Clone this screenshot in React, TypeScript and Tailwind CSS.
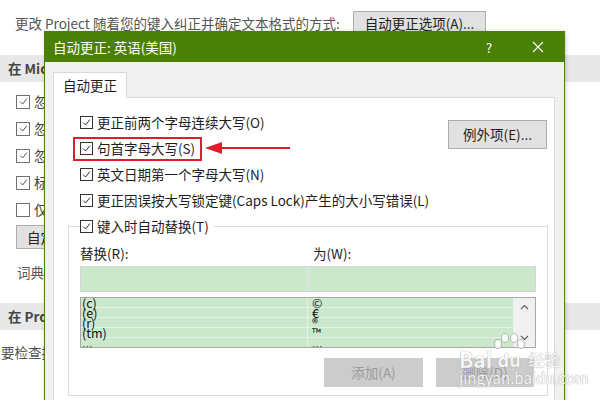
import React from 'react';

const Box: React.FC<{ checked?: boolean; page?: boolean }> = ({ checked = true, page = false }) => (
  <span
    className={`inline-flex shrink-0 items-center justify-center bg-white border ${
      page ? 'w-[14px] h-[14px] border-[#707070]' : 'w-[13px] h-[13px] border-[#333]'
    }`}
  >
    {checked && (
      <svg width="9" height="9" viewBox="0 0 9 9">
        <path d="M1.2 4.6 L3.6 7 L7.9 1.6" fill="none" stroke={page ? '#555' : '#333'} strokeWidth="1" />
      </svg>
    )}
  </span>
);

const pageChecks = [
  { label: '忽略全部大写的单词(U)', checked: true },
  { label: '忽略包含数字的单词(B)', checked: true },
  { label: '忽略 Internet 和文件地址(F)', checked: true },
  { label: '标记重复单词(R)', checked: true },
  { label: '仅根据主词典提供建议(I)', checked: false },
];

const dialogChecks = [
  '更正前两个字母连续大写(O)',
  '句首字母大写(S)',
  '英文日期第一个字母大写(N)',
  '更正因误按大写锁定键(Caps Lock)产生的大小写错误(L)',
];

const entries = [
  ['(c)', '©'],
  ['(e)', '€'],
  ['(r)', '®'],
  ['(tm)', '™'],
  ['...', '...'],
];

const App: React.FC = () => {
  return (
    <div className="relative w-[600px] h-[400px] overflow-hidden bg-white text-[13.5px] text-[#444] font-['Noto_Sans_CJK_SC',sans-serif]">
      {/* page behind the dialog */}
      <div className="flex items-center h-[25px] mt-[11px] pl-[15px] gap-[13px]">
        <span className="text-[#555]">更改 Project 随着您的键入纠正并确定文本格式的方式:</span>
        <button className="h-[25px] px-[11px] bg-[#e1e1e1] border border-[#adadad] text-[#222]">自动更正选项(A)...</button>
      </div>

      <div className="mt-[19px] h-[27px] flex items-center pl-[8px] bg-[#e8e8e8] font-bold text-[#444]">
        在 Microsoft Office 程序中更正拼写时
      </div>
      <div className="pt-[6px] pl-[16px]">
        {pageChecks.map((c) => (
          <div key={c.label} className="h-[27px] flex items-center gap-[4px]">
            <Box page checked={c.checked} />
            <span>{c.label}</span>
          </div>
        ))}
      </div>
      <button className="ml-[16px] mt-[2px] h-[24px] px-[10px] bg-[#e1e1e1] border border-[#adadad] text-[#222]">自定义词典(C)...</button>
      <div className="mt-[13px] h-[20px] pl-[17px] leading-[20px] text-[#555]">词典语言(L): 英语(美国)</div>
      <div className="mt-[21px] h-[27px] flex items-center pl-[8px] bg-[#e8e8e8] font-bold text-[#444]">
        在 Project 中更正拼写时
      </div>
      <div className="mt-[12px] h-[20px] pl-[1px] leading-[20px] text-[#555]">要检查拼写，请单击“审阅”选项卡上的“拼写检查”。</div>

      {/* dialog */}
      <div className="absolute left-[44px] top-[31px] w-[521px] h-[400px] border border-[#4a8005] bg-[#f0f0f0] shadow-[1px_1px_4px_rgba(0,0,0,0.2)] text-[#1e1e1e]">
        <div className="h-[30px] bg-[#4a8005] flex items-center pl-[8px] text-white">
          <span className="flex-1">自动更正: 英语(美国)</span>
          <span className="w-[20px] text-center mr-[33px]">?</span>
          <svg width="12" height="12" viewBox="0 0 12 12" className="mr-[20px]">
            <path d="M1 1 L11 11 M11 1 L1 11" stroke="#fff" strokeWidth="1.1" />
          </svg>
        </div>

        <div className="pl-[8px] pr-[9px] pt-[10px]">
          <div className="relative z-10 -mb-px w-[74px] h-[26px] flex items-center justify-center bg-white border border-b-0 border-[#d9d9d9]">
            自动更正
          </div>
          <div className="h-[320px] bg-white border border-[#d9d9d9]">
            <div className="flex pl-[26px] pr-[7px] pt-[11px]">
              <div className="flex-1">
                {dialogChecks.map((t, i) => (
                  <div key={t} className="relative h-[26px] flex items-center gap-[4px] whitespace-nowrap">
                    <Box />
                    <span>{t}</span>
                    {i === 1 && (
                      <>
                        <span className="absolute left-[-7px] top-[2px] w-[129px] h-[24px] border-2 border-[#dc1f2b]" />
                        <svg className="absolute left-[125px] top-[5px]" width="86" height="16" viewBox="0 0 86 16">
                          <path d="M14 8 L85 8" stroke="#dc1f2b" strokeWidth="2" />
                          <polygon points="0,8 17,2 17,14" fill="#dc1f2b" />
                        </svg>
                      </>
                    )}
                  </div>
                ))}
              </div>
              <button className="mt-[11px] w-[99px] h-[29px] bg-[#e1e1e1] border border-[#adadad]">例外项(E)...</button>
            </div>

            <fieldset className="ml-[14px] mr-[6px] border border-[#dcdcdc] pb-[8px]">
              <legend className="ml-[11px] pr-[5px] h-[26px] flex items-center gap-[4px]">
                <Box />
                <span>键入时自动替换(T)</span>
              </legend>
              <div className="px-[11px]">
                <div className="mt-[4px] h-[20px] grid grid-cols-2 leading-[20px]">
                  <span>替换(R):</span>
                  <span className="pl-[5px]">为(W):</span>
                </div>
                <div className="mt-[3px] h-[26px] grid grid-cols-2 gap-px bg-[#e4e4e4] border border-[#d4d4d4]">
                  <div className="bg-[#cce8cc]" />
                  <div className="bg-[#cce8cc]" />
                </div>
                <div className="mt-[5px] h-[51px] flex border border-[#a8a8a8] overflow-hidden text-[12.5px] text-[#111]">
                  <div className="flex-1 bg-[#cce8cc]">
                    {entries.map(([a, b]) => (
                      <div key={a} className="grid grid-cols-[227px_1fr] h-[10px] border-b border-[#e2f2e2] leading-[10px]">
                        <span className="pl-[1px] border-r border-[#e2f2e2]">{a}</span>
                        <span className="pl-[4px]">{b}</span>
                      </div>
                    ))}
                  </div>
                  <div className="w-[22px] bg-[#f0f0f0] flex flex-col items-center justify-between py-[6px]">
                    <svg width="9" height="6" viewBox="0 0 9 6">
                      <path d="M1 5 L4.5 1.5 L8 5" fill="none" stroke="#606060" strokeWidth="1.2" />
                    </svg>
                    <svg width="9" height="6" viewBox="0 0 9 6">
                      <path d="M1 1 L4.5 4.5 L8 1" fill="none" stroke="#606060" strokeWidth="1.2" />
                    </svg>
                  </div>
                </div>
                <div className="mt-[10px] flex justify-end gap-[13px] pr-[2px]">
                  <button className="w-[99px] h-[29px] bg-[#cccccc] text-[#9a9a9a]">添加(A)</button>
                  <button className="w-[98px] h-[29px] bg-[#cccccc] text-[#9a9a9a]">删除(D)</button>
                </div>
              </div>
            </fieldset>
          </div>
        </div>
      </div>

      {/* watermark */}
      <div className="absolute left-[459px] top-[333px] flex flex-col items-start opacity-80 pointer-events-none text-white [text-shadow:0_0_1px_#999,0_0_1px_#999]">
        <div className="flex items-end h-[36px] font-bold leading-[20px]">
          <span className="text-[21px]">Bai</span>
          <span className="relative w-[34px] h-[36px] flex items-end justify-center">
            <svg className="absolute left-0 top-0" width="34" height="30" viewBox="0 0 34 30">
              <g fill="#fff" stroke="#aaa" strokeWidth="1">
                <ellipse cx="6" cy="11" rx="3.5" ry="4.5" />
                <ellipse cx="13" cy="5" rx="3.5" ry="4.5" />
                <ellipse cx="22" cy="5" rx="3.5" ry="4.5" />
                <ellipse cx="29" cy="11" rx="3.5" ry="4.5" />
              </g>
            </svg>
            <span className="relative text-[18px]">du</span>
          </span>
          <span className="ml-[2px] text-[16px] font-normal">经验</span>
        </div>
        <span className="mt-[1px] text-[15px] leading-[16px]">jingyan.baidu.com</span>
      </div>
    </div>
  );
};

export default App;
